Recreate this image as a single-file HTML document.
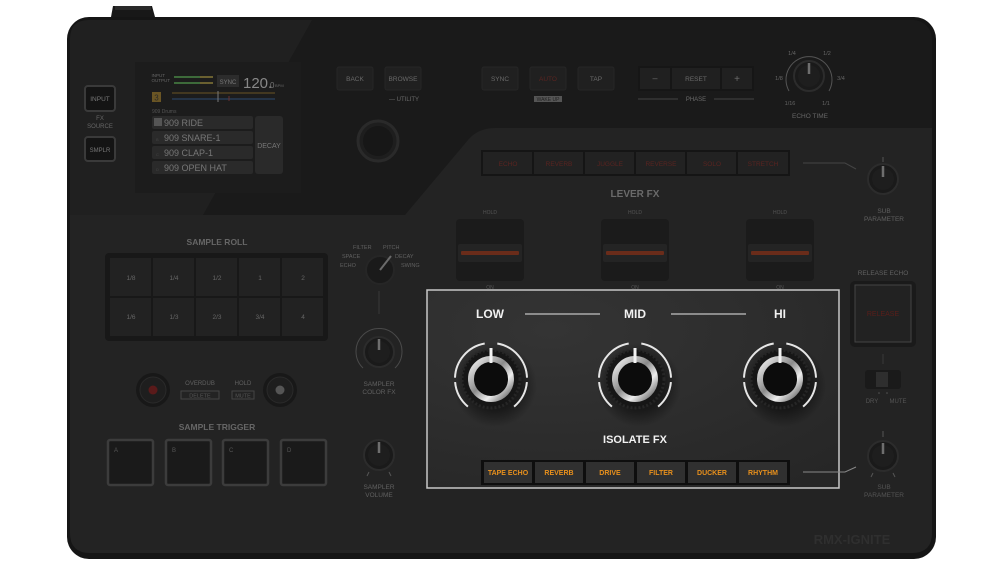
<!DOCTYPE html>
<html><head><meta charset="utf-8"><style>
html,body{margin:0;padding:0;background:#fff;width:1000px;height:569px;overflow:hidden}
svg{display:block}
text{font-family:"Liberation Sans",sans-serif}
</style></head><body>
<svg width="1000" height="569" viewBox="0 0 1000 569" xmlns="http://www.w3.org/2000/svg">
<defs>
<linearGradient id="ring" x1="0" y1="0" x2="1" y2="1">
<stop offset="0" stop-color="#f4f4f4"/><stop offset=".45" stop-color="#8a8a8a"/><stop offset=".7" stop-color="#eee"/><stop offset="1" stop-color="#555"/></linearGradient>
<radialGradient id="isoBg" cx=".3" cy=".2" r="1"><stop offset="0" stop-color="#343434"/><stop offset="1" stop-color="#262626"/></radialGradient>
<radialGradient id="shd"><stop offset=".6" stop-color="#000" stop-opacity=".45"/><stop offset="1" stop-color="#000" stop-opacity="0"/></radialGradient>
<g id="bigknob">
<circle cx="4" cy="6" r="42" fill="url(#shd)"/>
<path d="M-23.1,27.6 A36,36 0 0 1 -35.9,3.1 M-36,-1.3 A36,36 0 0 1 -6.3,-35.5 M6.3,-35.5 A36,36 0 0 1 36,-1.3 M35.9,3.1 A36,36 0 0 1 23.1,27.6" fill="none" stroke="#e6e6e6" stroke-width="2"/>
<circle r="29" fill="#161616" stroke="#262626" stroke-width="3" stroke-dasharray="2 2"/>
<circle r="20" fill="#0c0c0c" stroke="url(#ring)" stroke-width="6"/>
<line x1="0" y1="-31" x2="0" y2="-16" stroke="#f2f2f2" stroke-width="3"/>
</g>
<g id="smknob">
<circle r="15" fill="#1a1a1a" stroke="#2c2c2c" stroke-width="2"/>
<circle r="11" fill="#1e1e1e"/>
<line x1="0" y1="-13" x2="0" y2="-2" stroke="#6e6e6e" stroke-width="2.5"/>
</g>
</defs>

<path d="M111,17 L113,6 L152,6 L155,17 Z" fill="#181818"/>
<rect x="115" y="6" width="36" height="4" fill="#2a2a2a"/>
<rect x="67" y="17" width="869" height="542" rx="22" fill="#151515"/>
<rect x="70" y="20" width="862" height="533" rx="19" fill="#1a1a1a"/>
<path d="M89,20 L312,20 L203,215 L70,215 L70,39 Q70,20 89,20 Z" fill="#202020"/>
<path d="M70,215 L405,215 L468,140 Q478,128 495,128 L932,128 L932,533 Q932,553 912,553 L90,553 Q70,553 70,533 Z" fill="#232323"/>

<rect x="85" y="86" width="30" height="25" rx="3" fill="#141414" stroke="#3a3a3a" stroke-width="2"/>
<text x="100" y="101" font-size="6.5" fill="#777" text-anchor="middle">INPUT</text>
<text x="100" y="120" font-size="6" fill="#666" text-anchor="middle">FX</text>
<text x="100" y="128" font-size="6" fill="#666" text-anchor="middle">SOURCE</text>
<rect x="85" y="137" width="30" height="24" rx="3" fill="#141414" stroke="#3a3a3a" stroke-width="2"/>
<text x="100" y="152" font-size="6" fill="#777" text-anchor="middle">SMPLR</text>

<rect x="135" y="62" width="166" height="131" fill="#1c1c1c"/>
<text x="165" y="77" font-size="4.5" fill="#666" text-anchor="end">INPUT</text>
<text x="170" y="82" font-size="4.5" fill="#666" text-anchor="end">OUTPUT</text>
<rect x="174" y="76" width="26" height="2" fill="#3d6a3a"/><rect x="200" y="76" width="13" height="2" fill="#6a6030"/>
<rect x="174" y="82" width="26" height="2" fill="#3d6a3a"/><rect x="200" y="82" width="13" height="2" fill="#6a6030"/>
<rect x="217" y="75" width="22" height="12" fill="#2c2c2c"/>
<text x="228" y="84" font-size="6" fill="#777" text-anchor="middle">SYNC</text>
<text x="243" y="88" font-size="15" fill="#888">120.</text><text x="270" y="88" font-size="8" fill="#777">0</text><text x="275" y="87" font-size="4" fill="#666">BPM</text>
<rect x="152" y="92" width="9" height="10" fill="#6a5524"/><text x="156.5" y="100.5" font-size="8" fill="#2a2a2a" text-anchor="middle">3</text>
<line x1="172" y1="93" x2="275" y2="93" stroke="#6a5524" stroke-width="1"/>
<line x1="172" y1="99" x2="275" y2="99" stroke="#2d4a70" stroke-width="1"/>
<line x1="218" y1="91" x2="218" y2="102" stroke="#777" stroke-width="1"/>
<line x1="229" y1="96" x2="229" y2="101" stroke="#6a3030" stroke-width="1"/>
<text x="152" y="113" font-size="5" fill="#555">909 Drums</text>
<g font-size="9" fill="#777">
<rect x="152" y="116" width="101" height="13" rx="2" fill="#2a2a2a"/><rect x="154" y="118" width="8" height="8" fill="#555"/><text x="164" y="126">909 RIDE</text>
<rect x="152" y="131" width="101" height="13" rx="2" fill="#2a2a2a"/><text x="164" y="141">909 SNARE-1</text>
<rect x="152" y="146" width="101" height="13" rx="2" fill="#2a2a2a"/><text x="164" y="156">909 CLAP-1</text>
<rect x="152" y="161" width="101" height="13" rx="2" fill="#2a2a2a"/><text x="164" y="171">909 OPEN HAT</text>
</g>
<g font-size="4" fill="#444"><text x="156" y="141">B</text><text x="156" y="156">C</text><text x="156" y="171">D</text></g>
<rect x="255" y="116" width="28" height="58" rx="3" fill="#2a2a2a"/>
<text x="269" y="148" font-size="7" fill="#777" text-anchor="middle">DECAY</text>

<g font-size="6.5" fill="#6a6a6a" text-anchor="middle">
<rect x="337" y="67" width="36" height="23" rx="2" fill="#202020" stroke="#262626"/><text x="355" y="81">BACK</text>
<rect x="385" y="67" width="36" height="23" rx="2" fill="#202020" stroke="#262626"/><text x="403" y="81">BROWSE</text>
<text x="404" y="101" font-size="6">— UTILITY</text>
<rect x="482" y="67" width="36" height="23" rx="2" fill="#202020" stroke="#262626"/><text x="500" y="81">SYNC</text>
<rect x="530" y="67" width="36" height="23" rx="2" fill="#202020" stroke="#262626"/><text x="548" y="81" fill="#5a2420">AUTO</text>
<rect x="578" y="67" width="36" height="23" rx="2" fill="#202020" stroke="#262626"/><text x="596" y="81">TAP</text>
<rect x="534" y="96" width="28" height="6" fill="#555"/><text x="548" y="101" font-size="5" fill="#222">WAKE UP</text>
<rect x="638" y="66" width="116" height="25" fill="#161616"/>
<rect x="640" y="68" width="30" height="21" fill="#202020"/><text x="655" y="81" font-size="9">–</text>
<rect x="672" y="68" width="48" height="21" fill="#202020"/><text x="696" y="81">RESET</text>
<rect x="722" y="68" width="30" height="21" fill="#202020"/><text x="737" y="82" font-size="10">+</text>
<text x="696" y="101" font-size="6">PHASE</text>
</g>
<line x1="638" y1="99" x2="678" y2="99" stroke="#444"/><line x1="714" y1="99" x2="754" y2="99" stroke="#444"/>
<circle cx="378" cy="141" r="20" fill="#1e1e1e" stroke="#2a2a2a" stroke-width="3"/>
<circle cx="378" cy="141" r="15" fill="#171717"/>
<path d="M789,91 A23,23 0 1 1 829,91" fill="none" stroke="#555" stroke-width="1"/>
<g transform="translate(809,76)"><use href="#smknob"/></g>
<g font-size="5.5" fill="#666" text-anchor="middle">
<text x="792" y="55">1/4</text><text x="827" y="55">1/2</text><text x="779" y="80">1/8</text><text x="841" y="80">3/4</text>
<text x="790" y="105">1/16</text><text x="826" y="105">1/1</text>
<text x="810" y="118" font-size="6.5">ECHO TIME</text>
</g>

<rect x="481" y="150" width="309" height="26" fill="#151515"/>
<g font-size="6.5" fill="#5a2420" text-anchor="middle">
<rect x="483" y="152" width="49" height="22" fill="#222"/><text x="508" y="166">ECHO</text>
<rect x="534" y="152" width="49" height="22" fill="#222"/><text x="559" y="166">REVERB</text>
<rect x="585" y="152" width="49" height="22" fill="#222"/><text x="610" y="166">JUGGLE</text>
<rect x="636" y="152" width="49" height="22" fill="#222"/><text x="661" y="166">REVERSE</text>
<rect x="687" y="152" width="49" height="22" fill="#222"/><text x="712" y="166">SOLO</text>
<rect x="738" y="152" width="50" height="22" fill="#222"/><text x="763" y="166">STRETCH</text>
</g>
<path d="M803,163 L845,163 L856,169" fill="none" stroke="#444"/>
<g transform="translate(883,179)"><use href="#smknob"/></g>
<line x1="883" y1="157" x2="883" y2="162" stroke="#555"/>
<g font-size="6.5" fill="#606060" text-anchor="middle"><text x="884" y="213">SUB</text><text x="884" y="221">PARAMETER</text></g>
<text x="635" y="197" font-size="10" fill="#6a6a6a" text-anchor="middle" font-weight="bold">LEVER FX</text>
<g font-size="5" fill="#555" text-anchor="middle">
<text x="490" y="214">HOLD</text><text x="635" y="214">HOLD</text><text x="780" y="214">HOLD</text>
<text x="490" y="289">ON</text><text x="635" y="289">ON</text><text x="780" y="289">ON</text>
</g>
<g>
<rect x="456" y="219" width="68" height="62" rx="4" fill="#1b1b1b"/><rect x="458" y="244" width="64" height="18" rx="2" fill="#242424"/><rect x="461" y="251" width="58" height="4" rx="1" fill="#6a2c1a"/>
<rect x="601" y="219" width="68" height="62" rx="4" fill="#1b1b1b"/><rect x="603" y="244" width="64" height="18" rx="2" fill="#242424"/><rect x="606" y="251" width="58" height="4" rx="1" fill="#6a2c1a"/>
<rect x="746" y="219" width="68" height="62" rx="4" fill="#1b1b1b"/><rect x="748" y="244" width="64" height="18" rx="2" fill="#242424"/><rect x="751" y="251" width="58" height="4" rx="1" fill="#6a2c1a"/>
</g>

<text x="217" y="245" font-size="8.5" fill="#666" text-anchor="middle" font-weight="bold">SAMPLE ROLL</text>
<rect x="105" y="253" width="223" height="88" rx="4" fill="#181818"/>
<g font-size="6.5" fill="#666" text-anchor="middle">
<g fill="#222">
<rect x="110" y="258" width="41" height="38"/><rect x="153" y="258" width="41" height="38"/><rect x="196" y="258" width="41" height="38"/><rect x="239" y="258" width="41" height="38"/><rect x="282" y="258" width="41" height="38"/>
<rect x="110" y="298" width="41" height="38"/><rect x="153" y="298" width="41" height="38"/><rect x="196" y="298" width="41" height="38"/><rect x="239" y="298" width="41" height="38"/><rect x="282" y="298" width="41" height="38"/>
</g>
<text x="131" y="280">1/8</text><text x="174" y="280">1/4</text><text x="217" y="280">1/2</text><text x="260" y="280">1</text><text x="303" y="280">2</text>
<text x="131" y="319">1/6</text><text x="174" y="319">1/3</text><text x="217" y="319">2/3</text><text x="260" y="319">3/4</text><text x="303" y="319">4</text>
</g>
<circle cx="380" cy="270" r="14" fill="#1a1a1a" stroke="#262626" stroke-width="2"/>
<line x1="380" y1="270" x2="391" y2="256" stroke="#6a6a6a" stroke-width="2"/>
<g font-size="5.5" fill="#606060">
<text x="353" y="249">FILTER</text><text x="383" y="249">PITCH</text><text x="342" y="258">SPACE</text><text x="395" y="258">DECAY</text><text x="340" y="267">ECHO</text><text x="401" y="267">SWING</text>
</g>
<line x1="379" y1="291" x2="379" y2="314" stroke="#3a3a3a"/>
<path d="M363,368 A23,23 0 1 1 395,368" fill="none" stroke="#4a4a4a"/>
<g transform="translate(379,352)"><use href="#smknob"/></g>
<g font-size="6.5" fill="#606060" text-anchor="middle"><text x="379" y="386">SAMPLER</text><text x="379" y="394">COLOR FX</text></g>
<circle cx="153" cy="390" r="17" fill="#181818"/><circle cx="153" cy="390" r="13" fill="#1e1e1e" stroke="#2a2a2a"/><circle cx="153" cy="390" r="4.5" fill="#5a1a1a"/>
<circle cx="280" cy="390" r="17" fill="#181818"/><circle cx="280" cy="390" r="13" fill="#1e1e1e" stroke="#2a2a2a"/><circle cx="280" cy="390" r="4.5" fill="#555"/>
<g font-size="6" fill="#606060" text-anchor="middle">
<text x="200" y="385">OVERDUB</text><text x="243" y="385">HOLD</text>
<rect x="181" y="391" width="38" height="8" fill="none" stroke="#444"/><text x="200" y="397.5" font-size="5.5" fill="#555">DELETE</text>
<rect x="232" y="391" width="22" height="8" fill="none" stroke="#444"/><text x="243" y="397.5" font-size="5.5" fill="#555">MUTE</text>
</g>
<text x="217" y="430" font-size="8.5" fill="#666" text-anchor="middle" font-weight="bold">SAMPLE TRIGGER</text>
<g fill="#1a1a1a" stroke="#3c3c3c" stroke-width="2.5">
<rect x="108" y="440" width="45" height="45" rx="2"/><rect x="166" y="440" width="45" height="45" rx="2"/><rect x="223" y="440" width="45" height="45" rx="2"/><rect x="281" y="440" width="45" height="45" rx="2"/>
</g>
<g font-size="6" fill="#555"><text x="114" y="452">A</text><text x="172" y="452">B</text><text x="229" y="452">C</text><text x="287" y="452">D</text></g>
<g transform="translate(379,455)"><use href="#smknob"/></g>
<path d="M369,472 L367,476 M389,472 L391,476" stroke="#555"/>
<g font-size="6.5" fill="#606060" text-anchor="middle"><text x="379" y="489">SAMPLER</text><text x="379" y="497">VOLUME</text></g>

<rect x="427" y="290" width="412" height="198" fill="url(#isoBg)" stroke="#c8c8c8" stroke-width="1.5"/>
<g font-size="12" fill="#f2f2f2" text-anchor="middle" font-weight="bold">
<text x="490" y="318">LOW</text><text x="635" y="318">MID</text><text x="780" y="318">HI</text>
</g>
<line x1="525" y1="314" x2="600" y2="314" stroke="#aaa" stroke-width="1.5"/>
<line x1="671" y1="314" x2="746" y2="314" stroke="#aaa" stroke-width="1.5"/>
<g transform="translate(491,379)"><use href="#bigknob"/></g>
<g transform="translate(635,379)"><use href="#bigknob"/></g>
<g transform="translate(780,379)"><use href="#bigknob"/></g>
<text x="635" y="443" font-size="11" fill="#f2f2f2" text-anchor="middle" font-weight="bold">ISOLATE FX</text>
<rect x="481" y="460" width="309" height="25" fill="#0e0e0e"/>
<g font-size="7" fill="#e8901c" text-anchor="middle" font-weight="bold">
<rect x="484" y="462" width="48" height="21" fill="#303030"/><text x="508" y="475">TAPE ECHO</text>
<rect x="535" y="462" width="48" height="21" fill="#303030"/><text x="559" y="475">REVERB</text>
<rect x="586" y="462" width="48" height="21" fill="#303030"/><text x="610" y="475">DRIVE</text>
<rect x="637" y="462" width="48" height="21" fill="#303030"/><text x="661" y="475">FILTER</text>
<rect x="688" y="462" width="48" height="21" fill="#303030"/><text x="712" y="475">DUCKER</text>
<rect x="739" y="462" width="48" height="21" fill="#303030"/><text x="763" y="475">RHYTHM</text>
</g>
<path d="M803,472 L845,472 L856,467" fill="none" stroke="#888"/>

<text x="883" y="275" font-size="6.5" fill="#606060" text-anchor="middle">RELEASE ECHO</text>
<rect x="850" y="281" width="66" height="66" rx="5" fill="#1a1a1a"/>
<rect x="855" y="285" width="56" height="57" fill="#222" stroke="#444" stroke-width="1"/>
<text x="883" y="316" font-size="7" fill="#5a1e1a" text-anchor="middle">RELEASE</text>
<line x1="883" y1="354" x2="883" y2="364" stroke="#3a3a3a"/>
<rect x="865" y="370" width="36" height="19" rx="3" fill="#1a1a1a"/>
<rect x="876" y="372" width="12" height="15" fill="#2e2e2e"/>
<circle cx="879" cy="393" r=".8" fill="#555"/><circle cx="887" cy="393" r=".8" fill="#555"/>
<g font-size="6" fill="#555" text-anchor="middle"><text x="872" y="403">DRY</text><text x="898" y="403">MUTE</text></g>
<g transform="translate(883,456)"><use href="#smknob"/></g>
<line x1="883" y1="431" x2="883" y2="437" stroke="#555"/>
<path d="M873,473 L871,477 M893,473 L895,477" stroke="#555"/>
<g font-size="6.5" fill="#555" text-anchor="middle"><text x="884" y="489">SUB</text><text x="884" y="497">PARAMETER</text></g>
<text x="852" y="544" font-size="13" fill="#2f2f2f" text-anchor="middle" font-weight="bold">RMX-IGNITE</text>
</svg>
</body></html>
